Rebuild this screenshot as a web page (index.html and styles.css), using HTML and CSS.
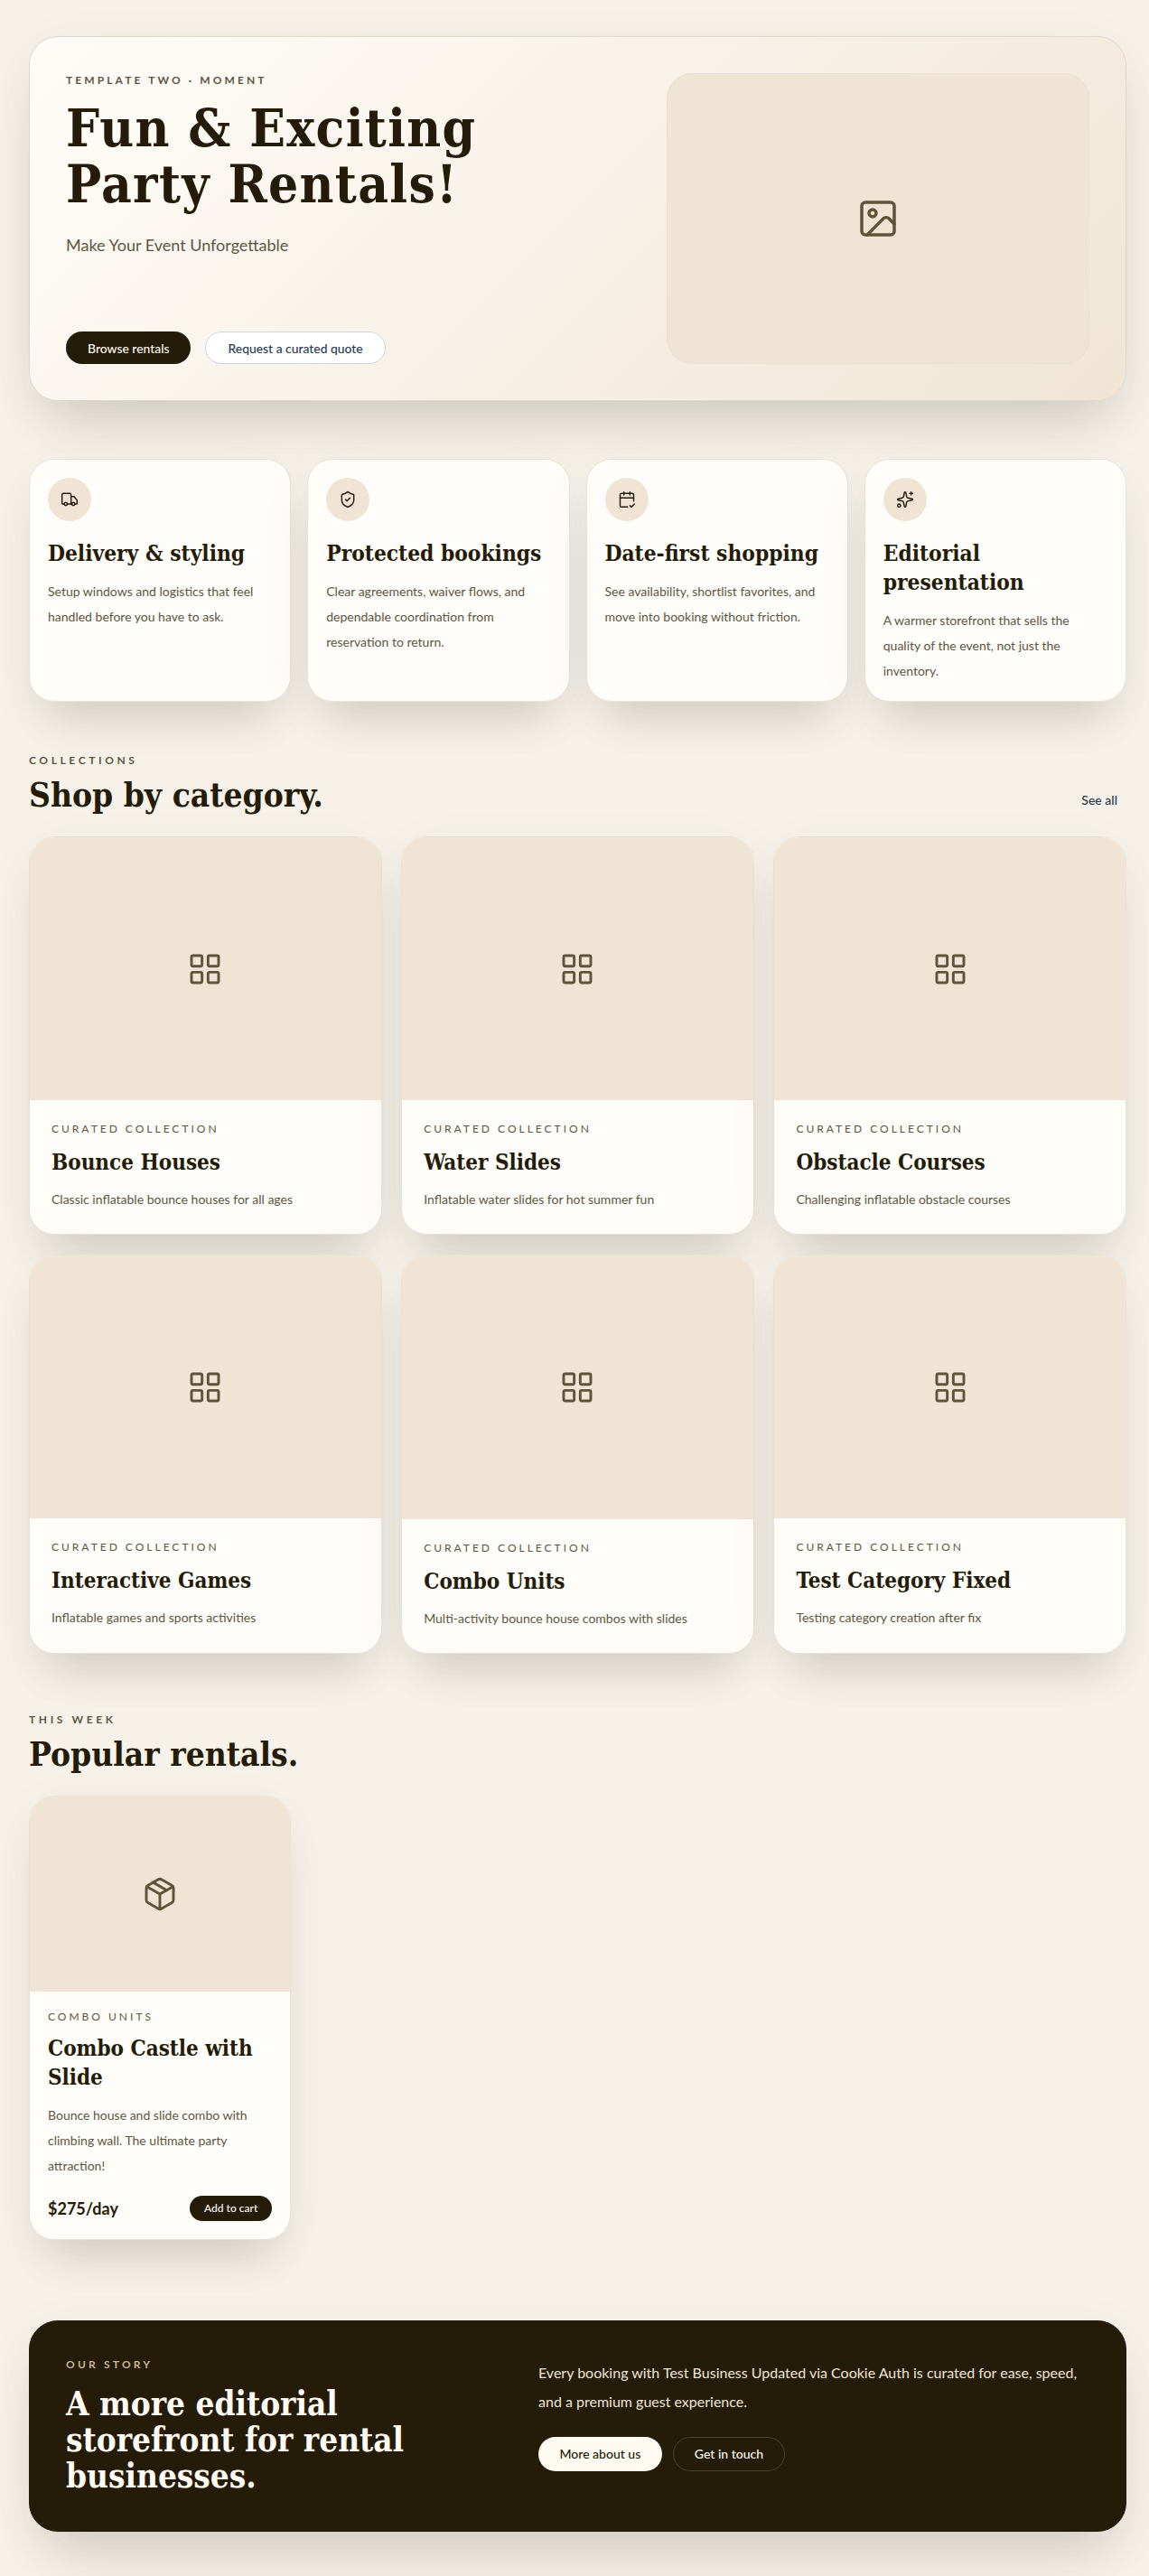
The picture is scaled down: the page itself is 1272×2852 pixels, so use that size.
FILE: index.html
```html
<!DOCTYPE html>
<html>
<head>
  <meta name="viewport" content="width=device-width, initial-scale=1.0">
  <title>Fun &amp; Exciting Party Rentals</title>
  <link rel="stylesheet" href="styles.css">
</head>
<body>

<svg class="sprite" width="0" height="0">
  <symbol id="i-image" viewBox="0 0 24 24"><rect x="3" y="3" width="18" height="18" rx="2"/><circle cx="9" cy="9" r="2"/><path d="m21 15-3.086-3.086a2 2 0 0 0-2.828 0L6 21"/></symbol>
  <symbol id="i-truck" viewBox="0 0 24 24"><path d="M14 18V6a2 2 0 0 0-2-2H4a2 2 0 0 0-2 2v11a1 1 0 0 0 1 1h2"/><path d="M15 18H9"/><path d="M19 18h2a1 1 0 0 0 1-1v-3.65a1 1 0 0 0-.22-.624l-3.48-4.35A1 1 0 0 0 17.52 8H14"/><circle cx="17" cy="18" r="2"/><circle cx="7" cy="18" r="2"/></symbol>
  <symbol id="i-shield" viewBox="0 0 24 24"><path d="M20 13c0 5-3.5 7.5-7.66 8.95a1 1 0 0 1-.67-.01C7.5 20.5 4 18 4 13V6a1 1 0 0 1 1-1c2 0 4.5-1.2 6.24-2.72a1.17 1.17 0 0 1 1.52 0C14.51 3.81 17 5 19 5a1 1 0 0 1 1 1z"/><path d="m9 12 2 2 4-4"/></symbol>
  <symbol id="i-calendar" viewBox="0 0 24 24"><path d="M8 2v4"/><path d="M16 2v4"/><path d="M21 14V6a2 2 0 0 0-2-2H5a2 2 0 0 0-2 2v14a2 2 0 0 0 2 2h8"/><path d="M3 10h18"/><path d="m16 20 2 2 4-4"/></symbol>
  <symbol id="i-sparkles" viewBox="0 0 24 24"><path d="M11.017 2.814a1 1 0 0 1 1.966 0l1.051 5.558a2 2 0 0 0 1.594 1.594l5.558 1.051a1 1 0 0 1 0 1.966l-5.558 1.051a2 2 0 0 0-1.594 1.594l-1.051 5.558a1 1 0 0 1-1.966 0l-1.051-5.558a2 2 0 0 0-1.594-1.594l-5.558-1.051a1 1 0 0 1 0-1.966l5.558-1.051a2 2 0 0 0 1.594-1.594z"/><path d="M20 2v4"/><path d="M22 4h-4"/><circle cx="4" cy="20" r="2"/></symbol>
  <symbol id="i-grid" viewBox="0 0 24 24"><rect x="3" y="3" width="7" height="7" rx="1"/><rect x="14" y="3" width="7" height="7" rx="1"/><rect x="14" y="14" width="7" height="7" rx="1"/><rect x="3" y="14" width="7" height="7" rx="1"/></symbol>
  <symbol id="i-package" viewBox="0 0 24 24"><path d="M11 21.73a2 2 0 0 0 2 0l7-4A2 2 0 0 0 21 16V8a2 2 0 0 0-1-1.73l-7-4a2 2 0 0 0-2 0l-7 4A2 2 0 0 0 3 8v8a2 2 0 0 0 1 1.73z"/><path d="M12 22V12"/><polyline points="3.29 7 12 12 20.71 7"/><path d="m7.5 4.27 9 5.15"/></symbol>
</svg>

<section class="hero">
  <div class="hero_text">
    <div class="eyebrow">Template Two · Moment</div>
    <h1>Fun &amp; Exciting<br>Party Rentals!</h1>
    <p class="hero_sub">Make Your Event Unforgettable</p>
    <div class="btn_row hero_btns">
      <a class="btn btn_dark">Browse rentals</a>
      <a class="btn btn_light">Request a curated quote</a>
    </div>
  </div>
  <div class="hero_image">
    <svg class="icon icon_large"><use href="#i-image"/></svg>
  </div>
</section>

<section class="features">
  <div class="feature">
    <div class="feature_icon"><svg class="icon icon_small"><use href="#i-truck"/></svg></div>
    <h3>Delivery &amp; styling</h3>
    <p>Setup windows and logistics that feel handled before you have to ask.</p>
  </div>
  <div class="feature">
    <div class="feature_icon"><svg class="icon icon_small"><use href="#i-shield"/></svg></div>
    <h3>Protected bookings</h3>
    <p>Clear agreements, waiver flows, and dependable coordination from reservation to return.</p>
  </div>
  <div class="feature">
    <div class="feature_icon"><svg class="icon icon_small"><use href="#i-calendar"/></svg></div>
    <h3>Date-first shopping</h3>
    <p>See availability, shortlist favorites, and move into booking without friction.</p>
  </div>
  <div class="feature">
    <div class="feature_icon"><svg class="icon icon_small"><use href="#i-sparkles"/></svg></div>
    <h3>Editorial presentation</h3>
    <p>A warmer storefront that sells the quality of the event, not just the inventory.</p>
  </div>
</section>

<section class="collections">
  <div class="section_head">
    <div>
      <div class="section_label">Collections</div>
      <h2>Shop by category.</h2>
    </div>
    <a class="see_all">See all</a>
  </div>
  <div class="category_grid">
    <div class="category">
      <div class="category_image"><svg class="icon icon_mid"><use href="#i-grid"/></svg></div>
      <div class="category_body">
        <div class="tag">Curated Collection</div>
        <h3>Bounce Houses</h3>
        <p>Classic inflatable bounce houses for all ages</p>
      </div>
    </div>
    <div class="category">
      <div class="category_image"><svg class="icon icon_mid"><use href="#i-grid"/></svg></div>
      <div class="category_body">
        <div class="tag">Curated Collection</div>
        <h3>Water Slides</h3>
        <p>Inflatable water slides for hot summer fun</p>
      </div>
    </div>
    <div class="category">
      <div class="category_image"><svg class="icon icon_mid"><use href="#i-grid"/></svg></div>
      <div class="category_body">
        <div class="tag">Curated Collection</div>
        <h3>Obstacle Courses</h3>
        <p>Challenging inflatable obstacle courses</p>
      </div>
    </div>
    <div class="category">
      <div class="category_image"><svg class="icon icon_mid"><use href="#i-grid"/></svg></div>
      <div class="category_body">
        <div class="tag">Curated Collection</div>
        <h3>Interactive Games</h3>
        <p>Inflatable games and sports activities</p>
      </div>
    </div>
    <div class="category">
      <div class="category_image"><svg class="icon icon_mid"><use href="#i-grid"/></svg></div>
      <div class="category_body">
        <div class="tag">Curated Collection</div>
        <h3>Combo Units</h3>
        <p>Multi-activity bounce house combos with slides</p>
      </div>
    </div>
    <div class="category">
      <div class="category_image"><svg class="icon icon_mid"><use href="#i-grid"/></svg></div>
      <div class="category_body">
        <div class="tag">Curated Collection</div>
        <h3>Test Category Fixed</h3>
        <p>Testing category creation after fix</p>
      </div>
    </div>
  </div>
</section>

<section class="popular">
  <div class="section_label">This Week</div>
  <h2>Popular rentals.</h2>
  <div class="product_grid">
    <div class="product">
      <div class="product_image"><svg class="icon icon_mid"><use href="#i-package"/></svg></div>
      <div class="product_body">
        <div class="tag">Combo Units</div>
        <h3>Combo Castle with Slide</h3>
        <p>Bounce house and slide combo with climbing wall. The ultimate party attraction!</p>
        <div class="product_foot">
          <span class="price">$275/day</span>
          <a class="btn btn_dark btn_small">Add to cart</a>
        </div>
      </div>
    </div>
  </div>
</section>

<section class="story">
  <div>
    <div class="section_label story_label">Our Story</div>
    <h2>A more editorial storefront for rental businesses.</h2>
  </div>
  <div>
    <p>Every booking with Test Business Updated via Cookie Auth is curated for ease, speed, and a premium guest experience.</p>
    <div class="btn_row story_btns">
      <a class="btn btn_cream">More about us</a>
      <a class="btn btn_outline">Get in touch</a>
    </div>
  </div>
</section>

</body>
</html>
```

FILE: styles.css
```css
html {
  background: #f6f2ea;
}
body {
  margin: 0;
  padding: 40px 25px 50.2px 32px;
  color: #241c08;
  font-family: "Lato", "Noto Sans", sans-serif;
}
h1, h2, h3 {
  margin: 0;
  font-family: "DejaVu Serif Condensed", "DejaVu Serif", serif;
  font-weight: 700;
  color: #241c08;
}
p {
  margin: 0;
}
.sprite {
  position: absolute;
}
.icon {
  display: block;
  fill: none;
  stroke: currentColor;
  stroke-width: 1.75;
  stroke-linecap: round;
  stroke-linejoin: round;
}
.icon_large {
  width: 48px;
  height: 48px;
  color: #5f5339;
}
.icon_mid {
  width: 40px;
  height: 40px;
  color: #5f5339;
}
.icon_small {
  width: 20px;
  height: 20px;
}

/* buttons */
.btn_row {
  display: flex;
}
.btn {
  display: flex;
  align-items: center;
  box-sizing: border-box;
  border-radius: 999px;
  font-size: 14px;
  font-weight: 500;
}
.btn_dark {
  background: #241c08;
  color: #fffaf2;
}
.btn_light {
  background: #fff;
  border: 1px solid #c8d3e3;
  color: #2b3850;
}
.btn_cream {
  background: #fffaf2;
  color: #241c08;
  height: 38px;
  padding: 0 23.5px;
}
.btn_outline {
  border: 1px solid #4a412c;
  color: #fffaf2;
  height: 38px;
  padding: 0 23px;
}
.btn_small {
  height: 28px;
  padding: 0 16px;
  font-size: 12px;
}

/* hero */
.hero {
  display: grid;
  grid-template-columns: 1fr 468px;
  gap: 32px;
  box-sizing: border-box;
  height: 404px;
  padding: 40px;
  border: 1px solid #dfd7c8;
  border-radius: 32px;
  background: linear-gradient(135deg, #fffdf9 0%, #f0e5d5 100%);
  box-shadow: 0 40px 60px -24px rgba(36, 28, 8, 0.16), 0 16px 60px rgba(36, 28, 8, 0.06);
}
.hero_text {
  display: flex;
  flex-direction: column;
}
.eyebrow {
  font-size: 12px;
  line-height: 16px;
  font-weight: 700;
  letter-spacing: 3.1px;
  text-transform: uppercase;
  color: #5e5643;
}
.hero h1 {
  margin-top: 15px;
  font-size: 58px;
  line-height: 61.6px;
  letter-spacing: 1.3px;
}
.hero_sub {
  margin-top: 22px;
  font-size: 18px;
  line-height: 28px;
  color: #5e5643;
}
.hero_btns {
  margin-top: auto;
  gap: 16px;
}
.hero_btns .btn {
  height: 36px;
  padding: 0 24px;
  font-size: 13.9px;
}
.hero_image {
  display: flex;
  align-items: center;
  justify-content: center;
  border: 1px solid #e8e0d2;
  border-radius: 28px;
  background: #f0e5d5;
}

/* feature cards */
.features {
  display: grid;
  grid-template-columns: repeat(4, 1fr);
  gap: 18px;
  margin-top: 64px;
}
.feature {
  height: 269px;
  box-sizing: border-box;
  padding: 20px;
  border: 1px solid #e8e2d6;
  border-radius: 28px;
  background: #fffdf9;
  box-shadow: 0 36px 50px -24px rgba(36, 28, 8, 0.16), 0 16px 60px rgba(36, 28, 8, 0.05);
}
.feature_icon {
  display: flex;
  align-items: center;
  justify-content: center;
  width: 48px;
  height: 48px;
  border-radius: 50%;
  background: #f0e5d5;
}
.feature h3 {
  margin-top: 20px;
  font-size: 24.3px;
  line-height: 32px;
}
.feature p {
  margin-top: 12px;
  font-size: 14px;
  line-height: 28px;
  color: #5e5643;
}

/* section heads */
.section_head {
  display: flex;
  align-items: flex-end;
  justify-content: space-between;
}
.section_label {
  font-size: 12px;
  line-height: 16px;
  font-weight: 700;
  letter-spacing: 0.3em;
  text-transform: uppercase;
  color: #5e5643;
}
.see_all {
  margin: 0 10px 8px 0;
  font-size: 14px;
  font-weight: 500;
  color: #2b3850;
}
.collections {
  margin-top: 57px;
}
.collections h2, .popular h2 {
  margin-top: 8px;
  font-size: 36.8px;
  line-height: 44px;
}

/* categories */
.category_grid {
  display: grid;
  grid-template-columns: repeat(3, 1fr);
  gap: 21.6px;
  margin-top: 24px;
}
.category, .product {
  overflow: hidden;
  border: 1px solid #e8e2d6;
  border-radius: 28px;
  background: #fffdf9;
  box-shadow: 0 36px 50px -24px rgba(36, 28, 8, 0.16), 0 16px 60px rgba(36, 28, 8, 0.05);
}
.category_image, .product_image {
  display: flex;
  align-items: center;
  justify-content: center;
  aspect-ratio: 4 / 3;
  background: #f0e5d5;
}
.category_body {
  padding: 24px;
}
.tag {
  font-size: 12px;
  line-height: 16px;
  letter-spacing: 0.25em;
  text-transform: uppercase;
  color: #5e5643;
}
.category h3 {
  margin-top: 13px;
  font-size: 24px;
  line-height: 32px;
}
.category p {
  margin-top: 11px;
  font-size: 14px;
  line-height: 28px;
  color: #5e5643;
}

/* popular rentals */
.popular {
  margin-top: 65px;
}
.product_grid {
  display: grid;
  grid-template-columns: repeat(4, 1fr);
  gap: 18px;
  margin-top: 24px;
}
.product_body {
  padding: 20px;
}
.product h3 {
  margin-top: 11px;
  font-size: 24px;
  line-height: 32px;
}
.product p {
  margin-top: 12px;
  font-size: 14px;
  line-height: 28px;
  color: #5e5643;
}
.product_foot {
  display: flex;
  align-items: center;
  justify-content: space-between;
  margin-top: 19px;
}
.price {
  font-size: 18px;
  font-weight: 700;
}

/* story band */
.story {
  display: grid;
  grid-template-columns: 483px 1fr;
  gap: 40px;
  box-sizing: border-box;
  height: 234px;
  margin-top: 89px;
  padding: 40px;
  border: 1px solid #241c08;
  border-radius: 32px;
  background: #241c08;
  box-shadow: 0 40px 60px -24px rgba(36, 28, 8, 0.16), 0 16px 60px rgba(36, 28, 8, 0.06);
}
.story_label {
  letter-spacing: 3.2px;
  color: #c9b48c;
}
.story h2 {
  margin-top: 16px;
  font-size: 36.6px;
  line-height: 40px;
  color: #fffaf2;
}
.story p {
  margin-top: 1px;
  font-size: 16px;
  line-height: 32px;
  color: #f0e5d5;
}
.story_btns {
  gap: 12px;
  margin-top: 23px;
}
```
